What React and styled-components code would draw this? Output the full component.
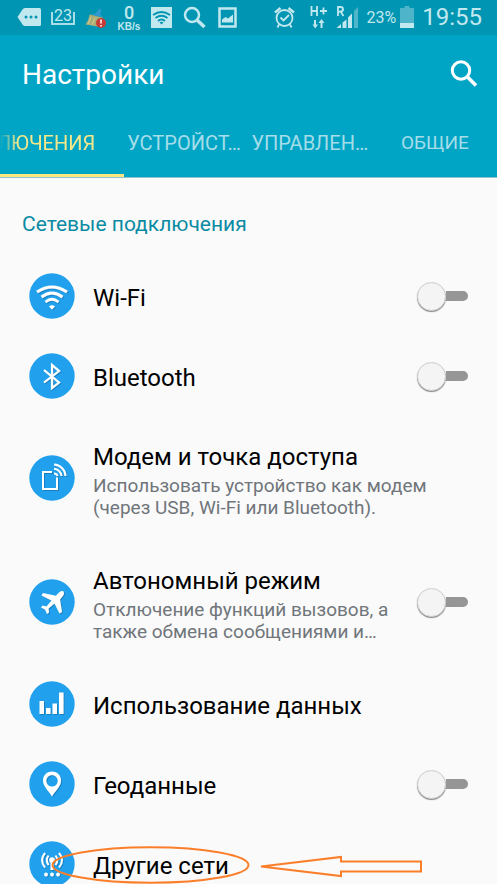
import React from "react";
import styled, { createGlobalStyle, css } from "styled-components";

const GlobalStyle = createGlobalStyle`
  *, *::before, *::after { box-sizing: border-box; }
  body { margin: 0; background: #fafafa; }
  button, input { font: inherit; margin: 0; }
`;

const Screen = styled.div`
  display: flex;
  flex-direction: column;
  height: 100vh;
  overflow: hidden;
  background: #fafafa;
  color: #000;
  font-family: Roboto, "Noto Sans", sans-serif;
`;

const StatusBar = styled.div`
  display: flex;
  flex: none;
  justify-content: space-between;
  align-items: center;
  height: 35px;
  padding: 0 15px 0 17px;
  background: #0095b2;
  color: #c2e8ef;
`;

const StatusGroup = styled.div`
  display: flex;
  align-items: center;
  gap: ${(p) => p.$gap}px;
`;

const StatusSvg = styled.svg`
  display: block;
  flex: none;
  height: 35px;
`;

const Badge = styled.span`
  display: flex;
  justify-content: center;
  align-items: center;
  width: 24px;
  height: 35px;
  padding-bottom: 4px;
  background:
    linear-gradient(#a9dde8, #a9dde8) left 0 top 12px / 2px 13px no-repeat,
    linear-gradient(#a9dde8, #a9dde8) right 0 top 12px / 2px 13px no-repeat,
    linear-gradient(#a9dde8, #a9dde8) left 0 top 23px / 24px 2px no-repeat;
  font-size: 16px;
  line-height: 20px;
`;

const Speed = styled.span`
  display: flex;
  flex-direction: column;
  align-items: center;
  width: 24px;
  font-size: 18px;
  font-weight: 500;
  line-height: 19px;
`;

const SpeedUnit = styled.span`
  font: bold 10px/10px "Liberation Sans", sans-serif;
`;

const Percent = styled.span`
  font-size: 16px;
  line-height: 35px;
`;

const Clock = styled.time`
  font-size: 24px;
  line-height: 37px;
`;

const Header = styled.header`
  flex: none;
  background: #00a5c6;
  border-bottom: 1px solid #8fc3cd;
`;

const TitleBar = styled.div`
  display: flex;
  justify-content: space-between;
  align-items: center;
  height: 78px;
  padding: 0 16px 0 22px;
`;

const Title = styled.h1`
  margin: 0;
  padding-top: 2px;
  color: #fff;
  font-size: 28px;
  font-weight: 400;
  line-height: 32px;
`;

const IconButton = styled.button`
  display: flex;
  padding: 0;
  border: 0;
  background: none;
  color: #fff;
  cursor: pointer;
`;

const Tabs = styled.nav`
  display: grid;
  grid-template-columns: repeat(4, 1fr);
  height: 64px;
`;

const Tab = styled.button`
  display: flex;
  justify-content: ${(p) => (p.$cut ? "flex-start" : "center")};
  overflow: hidden;
  padding: 18px 0 0 ${(p) => (p.$cut ? 3 : 0)}px;
  border: 0;
  border-bottom: 3px solid transparent;
  background: none;
  color: #a6dde8;
  font-size: ${(p) => (p.$cut ? 20 : 19)}px;
  line-height: 24px;
  white-space: nowrap;
  cursor: pointer;
  ${(p) =>
    p.$active &&
    css`
      justify-content: flex-end;
      padding-right: 29px;
      border-bottom-color: #ffe680;
      color: #f6e88a;
      font-size: 20px;
    `}
`;

const TabText = styled.span`
  ${(p) =>
    p.$fade &&
    css`
      display: flex;
      justify-content: flex-end;
      width: 100%;
      overflow: hidden;
      mask-image: linear-gradient(to right, transparent, #000 18px);
    `}
`;

const Content = styled.main`
  flex: 1;
  min-height: 0;
  overflow-y: auto;
  scrollbar-width: none;
`;

const SectionTitle = styled.h2`
  margin: 0;
  padding: 34px 22px 20px;
  color: #0b8ba3;
  font-size: 21px;
  font-weight: 400;
  line-height: 24px;
`;

const List = styled.ul`
  margin: 0;
  padding: 0;
  list-style: none;
`;

const Row = styled.li`
  position: relative;
  display: flex;
  align-items: center;
  min-height: ${(p) => (p.$tall ? 124 : 80)}px;
  padding: 0 29px;
`;

const Disc = styled.svg`
  display: block;
  flex: none;
  width: 46px;
  height: 46px;
  margin-right: 18px;
`;

const RowText = styled.div`
  display: flex;
  flex-direction: column;
  flex: 1;
  gap: 2px;
  min-width: 0;
  padding-top: 4px;
`;

const RowTitle = styled.label`
  font-size: 24px;
  line-height: 32px;
`;

const Description = styled.p`
  margin: 0;
  color: #70757a;
  font-size: 19px;
  line-height: 22px;
  white-space: pre-line;
`;

const Switch = styled.input`
  appearance: none;
  flex: none;
  display: flex;
  align-items: center;
  width: 51px;
  height: 30px;
  cursor: pointer;

  &::before {
    content: "";
    flex: none;
    width: 29px;
    height: 29px;
    border: 1px solid #d0d0d0;
    border-radius: 50%;
    background: #f4f4f4;
    box-shadow: 0 1px 1px #888;
  }

  &::after {
    content: "";
    flex: 1;
    height: 10px;
    border-radius: 0 5px 5px 0;
    background: #969696;
  }

  &:checked {
    flex-direction: row-reverse;
  }
  &:checked::after {
    border-radius: 5px 0 0 5px;
    background: #21a1ed;
  }
`;

const Annotation = styled.svg`
  position: absolute;
  top: 20px;
  left: 50px;
  width: 376px;
  height: 42px;
  pointer-events: none;
`;

const glyphs = {
  wifi: (
    <g fill="none" stroke="#fff" strokeWidth="3">
      <path d="M8 19Q23 9 38 19" />
      <path d="M12.500 24Q23 16 33.500 24" />
      <path d="M16.500 29Q23 23.500 29.500 29" strokeWidth="2.700" />
      <path d="M20 33.500Q23 31 26 33.500L23 36.500Z" fill="#fff" stroke="none" />
    </g>
  ),
  bluetooth: (
    <path
      d="M15 17 30 29.500 23 35V12L30 18 15 29.500"
      fill="none"
      stroke="#fff"
      strokeWidth="2.200"
    />
  ),
  tether: (
    <g fill="none" stroke="#fff" strokeWidth="2">
      <path d="M23 17H14V34H28V22.500" />
      <path d="M25 18.500A3.500 3.500 0 0 1 28.500 21" />
      <path d="M25 13.800A8 8 0 0 1 32.500 21" />
      <path d="M25 9.500A12 12 0 0 1 36.500 21" />
    </g>
  ),
  plane: (
    <path
      d="M34.500 12.500C33 11.500 31 12.500 29.500 14L26.800 16.700 14 14 12.500 16.500 22.500 21.500 17.500 27.500 13.500 26.500 12 28.500 16 30.500 18 35 20 33.500 19.500 29.500 25.500 24.500 30.500 34.500 33 33 31 20.500 33.500 17.500C35 16 35.300 14 34.500 12.500Z"
      fill="#fff"
    />
  ),
  data: (
    <path d="M10.500 20H15V33H10.500ZM17 27H21.500V33H17ZM23.500 22.500H28V33H23.500ZM30 11.500H34.500V33H30Z" fill="#fff" />
  ),
  location: (
    <path
      fillRule="evenodd"
      d="M23 10.500C17.500 10.500 14 14.500 14 19.500 14 25.500 19.500 29.500 23 35.500 26.500 29.500 32 25.500 32 19.500 32 14.500 28.500 10.500 23 10.500ZM23 14A5.800 5.800 0 1 1 23 25.600 5.800 5.800 0 0 1 23 14Z"
      fill="#fff"
    />
  ),
  networks: (
    <g fill="none" stroke="#fff" strokeWidth="2">
      <circle cx="23" cy="19" r="2.800" fill="#fff" stroke="none" />
      <path d="M23 19V29" strokeWidth="3" />
      <path d="M19.500 14.500Q16 19 19.500 24M26.500 14.500Q30 19 26.500 24" />
      <path d="M16 12Q10 19 16 26.500M30 12Q36 19 30 26.500" />
      <g fill="#fff" stroke="none">
        <circle cx="17" cy="33.500" r="1.900" />
        <circle cx="23" cy="33.500" r="1.900" />
        <circle cx="29" cy="33.500" r="1.900" />
      </g>
    </g>
  ),
};

function RowIcon({ name }) {
  return (
    <Disc viewBox="0 0 46 46" aria-hidden="true">
      <defs>
        <filter id={`shade-${name}`} x="-20%" y="-20%" width="150%" height="150%">
          <feDropShadow dx="1" dy="1" stdDeviation="0.500" floodColor="#0b5c91" floodOpacity="0.500" />
        </filter>
      </defs>
      <circle cx="23" cy="23" r="22.700" fill="#21a1ed" />
      <g filter={`url(#shade-${name})`}>{glyphs[name]}</g>
    </Disc>
  );
}

const rows = [
  { id: "wifi", title: "Wi-Fi", toggle: true },
  { id: "bluetooth", title: "Bluetooth", toggle: true },
  {
    id: "tether",
    title: "Модем и точка доступа",
    text: "Использовать устройство как модем\n(через USB, Wi-Fi или Bluetooth).",
  },
  {
    id: "plane",
    title: "Автономный режим",
    text: "Отключение функций вызовов, а\nтакже обмена сообщениями и…",
    toggle: true,
  },
  { id: "data", title: "Использование данных" },
  { id: "location", title: "Геоданные", toggle: true },
  { id: "networks", title: "Другие сети", marked: true },
];

const tabs = ["ПОДКЛЮЧЕНИЯ", "УСТРОЙСТ…", "УПРАВЛЕН…", "ОБЩИЕ"];

function NotificationIcons() {
  return (
    <StatusGroup $gap={10}>
      <StatusSvg width="24" viewBox="17 0 24 35">
        <path d="M25 8H39.500Q41 8 41 9.500V24.500Q41 26 39.500 26H25Q23.500 26 22.500 24.500L17.500 17 22.500 9.500Q23.500 8 25 8Z" fill="currentColor" />
        <g fill="#0095b2">
          <circle cx="26" cy="17" r="1.500" />
          <circle cx="31" cy="17" r="1.500" />
          <circle cx="36" cy="17" r="1.500" />
        </g>
      </StatusSvg>
      <Badge>23</Badge>
      <StatusSvg width="22" viewBox="85 0 22 35">
        <path d="M95 14 99.500 8.500 101.500 10 100 14.500 103 17 90 15Z" fill="#3198cf" />
        <path d="M89.500 14.500 102.500 17.500 100 27 85.500 24.500Q89 20 89.500 14.500Z" fill="#a9ad78" />
        <path d="M91 17 88 24M95 18 92 25M99 19 97 25" stroke="#d4cf93" />
        <circle cx="101" cy="23" r="5" fill="#c93b34" />
        <path d="M101 19.500V23.500M101 25V26.500" stroke="#fff" strokeWidth="1.500" />
      </StatusSvg>
      <Speed>
        <span>0</span>
        <SpeedUnit>KB/s</SpeedUnit>
      </Speed>
      <StatusSvg width="21" viewBox="151 0 21 35">
        <path d="M151 7H172V28H151Z" fill="currentColor" />
        <g fill="none" stroke="#0095b2" strokeWidth="1.800">
          <path d="M153 15Q161.500 9 170 15M155.500 18Q161.500 13.500 167.500 18M158 21Q161.500 18 165 21" />
          <path d="M159.500 22.500Q161.500 21 163.500 22.500L161.500 24.500Z" fill="#0095b2" stroke="none" />
        </g>
      </StatusSvg>
      <StatusSvg width="24" viewBox="182 0 24 35" fill="none" stroke="currentColor">
        <circle cx="192" cy="15" r="7" strokeWidth="2.500" />
        <path d="M197 20 204.500 27" strokeWidth="3.500" />
      </StatusSvg>
      <StatusSvg width="22" viewBox="216 0 22 35">
        <path d="M219.500 8.500H235.500V26.500H219.500Z" fill="none" stroke="currentColor" strokeWidth="2.500" />
        <path d="M222 22.500V19.500L225.500 17 228 18.500 233 14.500V22.500Z" fill="currentColor" />
      </StatusSvg>
    </StatusGroup>
  );
}

function SystemIcons() {
  return (
    <StatusGroup $gap={8}>
      <StatusSvg width="28" viewBox="272 0 28 35" fill="none" stroke="currentColor" strokeWidth="1.800">
        <circle cx="282.500" cy="18" r="8" />
        <path d="M278.500 17.500 281.500 20.500 287 15" />
        <path d="M273 12.500 278.500 8M292 12.500 286.500 8" strokeWidth="2.500" />
        <path d="M277 24.500 275.500 27.500M288 24.500 289.500 27.500" />
      </StatusSvg>
      <StatusSvg width="18" viewBox="308 0 18 35">
        <path d="M309.500 6V16M315 6V16M309.500 11H315M318 11H325M321.500 7.500V14.500" stroke="currentColor" strokeWidth="1.800" />
        <path d="M313 20V26M319.500 28V22" stroke="currentColor" strokeWidth="2" />
        <path d="M310.500 24.500H316L313.200 28.500ZM316.500 23H322.500L319.500 19Z" fill="currentColor" />
      </StatusSvg>
      <StatusSvg width="23" viewBox="333 0 23 35">
        <path d="M335 16V7H337.500Q340 7 340 9.300T337.500 11.600H335M337.500 11.600 340.500 16" fill="none" stroke="currentColor" strokeWidth="1.800" />
        <path d="M333.500 28 338 24V28ZM339.500 22.500 343.500 19.500V28H339.500ZM345 17.500 349 13.500V28H345Z" fill="currentColor" />
        <path d="M351 11 355 7V28H351Z" fill="#51b5c9" />
      </StatusSvg>
      <StatusGroup $gap={4}>
        <Percent>23%</Percent>
        <StatusSvg width="14" viewBox="398 0 14 35">
          <path d="M398 8H402.500V6H407.500V8H412V28H398Z" fill="#4eb4c9" />
          <path d="M398 23H412V28H398Z" fill="currentColor" />
        </StatusSvg>
      </StatusGroup>
      <Clock>19:55</Clock>
    </StatusGroup>
  );
}

export default function App() {
  return (
    <Screen>
      <GlobalStyle />
      <StatusBar>
        <NotificationIcons />
        <SystemIcons />
      </StatusBar>
      <Header>
        <TitleBar>
          <Title>Настройки</Title>
          <IconButton aria-label="Поиск">
            <svg width="34" height="34" viewBox="0 0 34 34" fill="none" stroke="currentColor">
              <circle cx="14" cy="13.500" r="8.700" strokeWidth="3" />
              <path d="M20 19.500 29 28.500" strokeWidth="3.500" />
            </svg>
          </IconButton>
        </TitleBar>
        <Tabs>
          {tabs.map((name, i) => (
            <Tab key={name} $active={i === 0} $cut={name.endsWith("…")}>
              <TabText $fade={i === 0}>{name}</TabText>
            </Tab>
          ))}
        </Tabs>
      </Header>
      <Content>
        <SectionTitle>Сетевые подключения</SectionTitle>
        <List>
          {rows.map((row) => (
            <Row key={row.id} $tall={Boolean(row.text)}>
              <RowIcon name={row.id} />
              <RowText>
                <RowTitle as={row.toggle ? "label" : "div"} htmlFor={row.toggle ? row.id : undefined}>
                  {row.title}
                </RowTitle>
                {row.text && <Description>{row.text}</Description>}
              </RowText>
              {row.toggle && <Switch type="checkbox" role="switch" id={row.id} />}
              {row.marked && (
                <Annotation viewBox="50 844 376 42" fill="none" stroke="#fb7f2b" strokeWidth="2" aria-hidden="true">
                  <ellipse cx="150.500" cy="865" rx="98" ry="17.800" />
                  <path d="M261 866.500 341 857V861.500H421V871.500H341V876Z" />
                </Annotation>
              )}
            </Row>
          ))}
        </List>
      </Content>
    </Screen>
  );
}
